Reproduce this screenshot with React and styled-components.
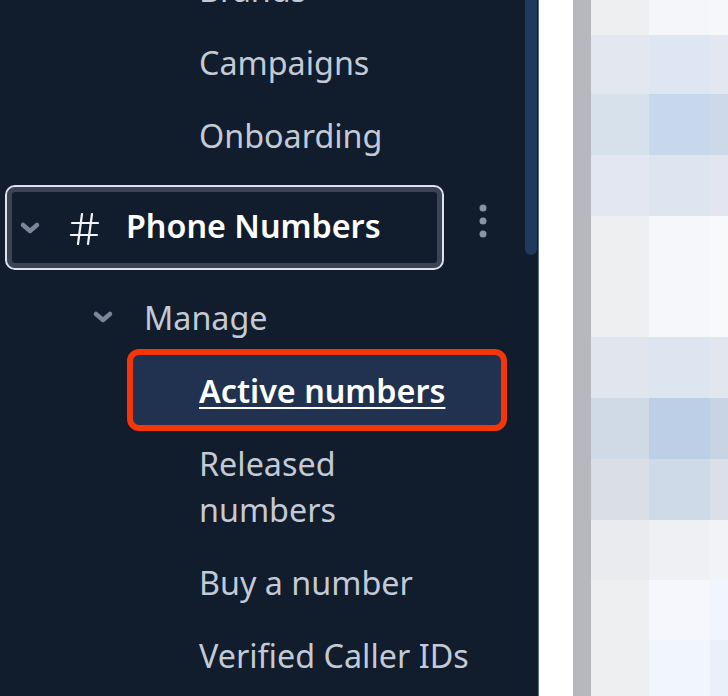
import React from "react";
import styled, { createGlobalStyle } from "styled-components";

const Global = createGlobalStyle`
  html, body { margin: 0; padding: 0; background: #fff; }
  #root { width: 728px; height: 696px; overflow: hidden; }
`;
const Page = styled.div`
  display: flex; width: 728px; height: 696px; overflow: hidden;
  font-family: "Noto Sans", "Open Sans", sans-serif;
`;
const Sidebar = styled.nav`
  position: relative; flex: 0 0 538px; height: 696px; overflow: hidden;
  background: #111c2c; border-right: 1px solid #5b6f82; box-sizing: content-box;
`;
const Scrollbar = styled.div`
  position: absolute; top: -20px; right: 1px; width: 12px; height: 275px;
  border-radius: 6px; background: #1f3a5e;
`;
const List = styled.div`
  display: flex; flex-direction: column; margin-top: -48px;
`;
const Item = styled.a`
  display: block; padding: 13.5px 0 13.5px 199px;
  width: 272px; font-size: 32.3px; line-height: 46px; color: #c3cad6;
`;
const SectionRow = styled.div`
  display: flex; align-items: center; margin: 14px 0 0 5px;
`;
const FocusBox = styled.div`
  display: flex; align-items: center; width: 439px; height: 85px; box-sizing: border-box;
  border: 2px solid #dfe3e9; border-radius: 10px; box-shadow: inset 0 0 0 5px #3b4456;
  background: #111c2c; padding-left: 12px;
`;
const SectionLabel = styled.span`
  font-size: 32.3px; font-weight: 600; color: #fff; margin: -5px 0 0 26px;
`;
const Chevron = styled.svg`
  flex: none; width: 22px; height: 14px; color: #7c8699;
`;
const HashIcon = styled.svg`
  flex: none; width: 30px; height: 38px; margin: 2px 0 0 29px; color: #f2f4f7;
`;
const Kebab = styled.svg`
  flex: none; width: 8px; height: 34px; margin: 0 0 13px 35px; color: #8a93a3;
`;
const GroupRow = styled.div`
  display: flex; align-items: center; height: 46px; margin-top: 24px; padding-left: 92px;
`;
const GroupLabel = styled.span`
  font-size: 32.3px; line-height: 46px; color: #c3cad6; margin-left: 30px;
`;
const ActiveItem = styled.a`
  display: flex; align-items: center; box-sizing: border-box; width: 380px; height: 82px;
  margin: 9px 0 -5px 127px; padding-left: 66px; border: 6px solid #f5360a; border-radius: 12px;
  background: #203250; font-size: 32.3px; font-weight: 600; color: #fff;
  text-decoration: underline; text-decoration-thickness: 2px; text-underline-offset: 4px;
`;
const Divider = styled.div`
  flex: 0 0 34px; background: #fff;
`;
const Rail = styled.div`
  flex: 0 0 18px; background: #b6b8bd;
`;
const Mosaic = styled.div`
  flex: 1; display: grid; grid-template-columns: 58px 61px 18px;
  grid-template-rows: 35px 59px 61px 61px 121px 61px 61px 61px 60px 60px 56px;
`;
const Cell = styled.div`
  background: ${(p) => p.$c};
`;

const rows = [
  ["#eeeff1", "#f4f6fa", "#f6f7fa"],
  ["#e3e7ef", "#dde6f2", "#e3e7f1"],
  ["#d6e1ec", "#c7d7ec", "#cdd9e9"],
  ["#e3e7f1", "#dde5f1", "#e3e6f0"],
  ["#eeeff1", "#f6f7fb", "#f8f9fb"],
  ["#e1e5ed", "#dce5f0", "#e1e6ef"],
  ["#d0dae7", "#bccfe6", "#c8d3e4"],
  ["#d9dee7", "#cedae8", "#dadfe9"],
  ["#e9ebef", "#eff0f4", "#f2f3f7"],
  ["#eeeff1", "#f6f7fc", "#f1f5fd"],
  ["#eeeff1", "#f1f5fc", "#e9f0fa"],
];

const Down = () => (
  <Chevron viewBox="0 0 22 14" fill="none" stroke="currentColor" strokeWidth="4.5" strokeLinecap="round" strokeLinejoin="round">
    <path d="M4 4l7 6 7-6" />
  </Chevron>
);

export default function App() {
  return (
    <Page>
      <Global />
      <Sidebar>
        <List>
          <Item>Brands</Item>
          <Item>Campaigns</Item>
          <Item>Onboarding</Item>
          <SectionRow>
            <FocusBox>
              <Down />
              <HashIcon viewBox="0 0 30 38" fill="none" stroke="currentColor" strokeWidth="2.2" strokeLinecap="round">
                <path d="M12 4L8 34M22 4l-4 30M2 13h26M1 25h26" />
              </HashIcon>
              <SectionLabel>Phone Numbers</SectionLabel>
            </FocusBox>
            <Kebab viewBox="0 0 8 34" fill="currentColor">
              <circle cx="4" cy="4" r="3.5" />
              <circle cx="4" cy="17" r="3.5" />
              <circle cx="4" cy="30" r="3.5" />
            </Kebab>
          </SectionRow>
          <GroupRow>
            <Down />
            <GroupLabel>Manage</GroupLabel>
          </GroupRow>
          <ActiveItem>Active numbers</ActiveItem>
          <Item>Released numbers</Item>
          <Item>Buy a number</Item>
          <Item>Verified Caller IDs</Item>
        </List>
        <Scrollbar />
      </Sidebar>
      <Divider />
      <Rail />
      <Mosaic>
        {rows.flatMap((r, i) => r.map((c, j) => <Cell key={`${i}-${j}`} $c={c} />))}
      </Mosaic>
    </Page>
  );
}
